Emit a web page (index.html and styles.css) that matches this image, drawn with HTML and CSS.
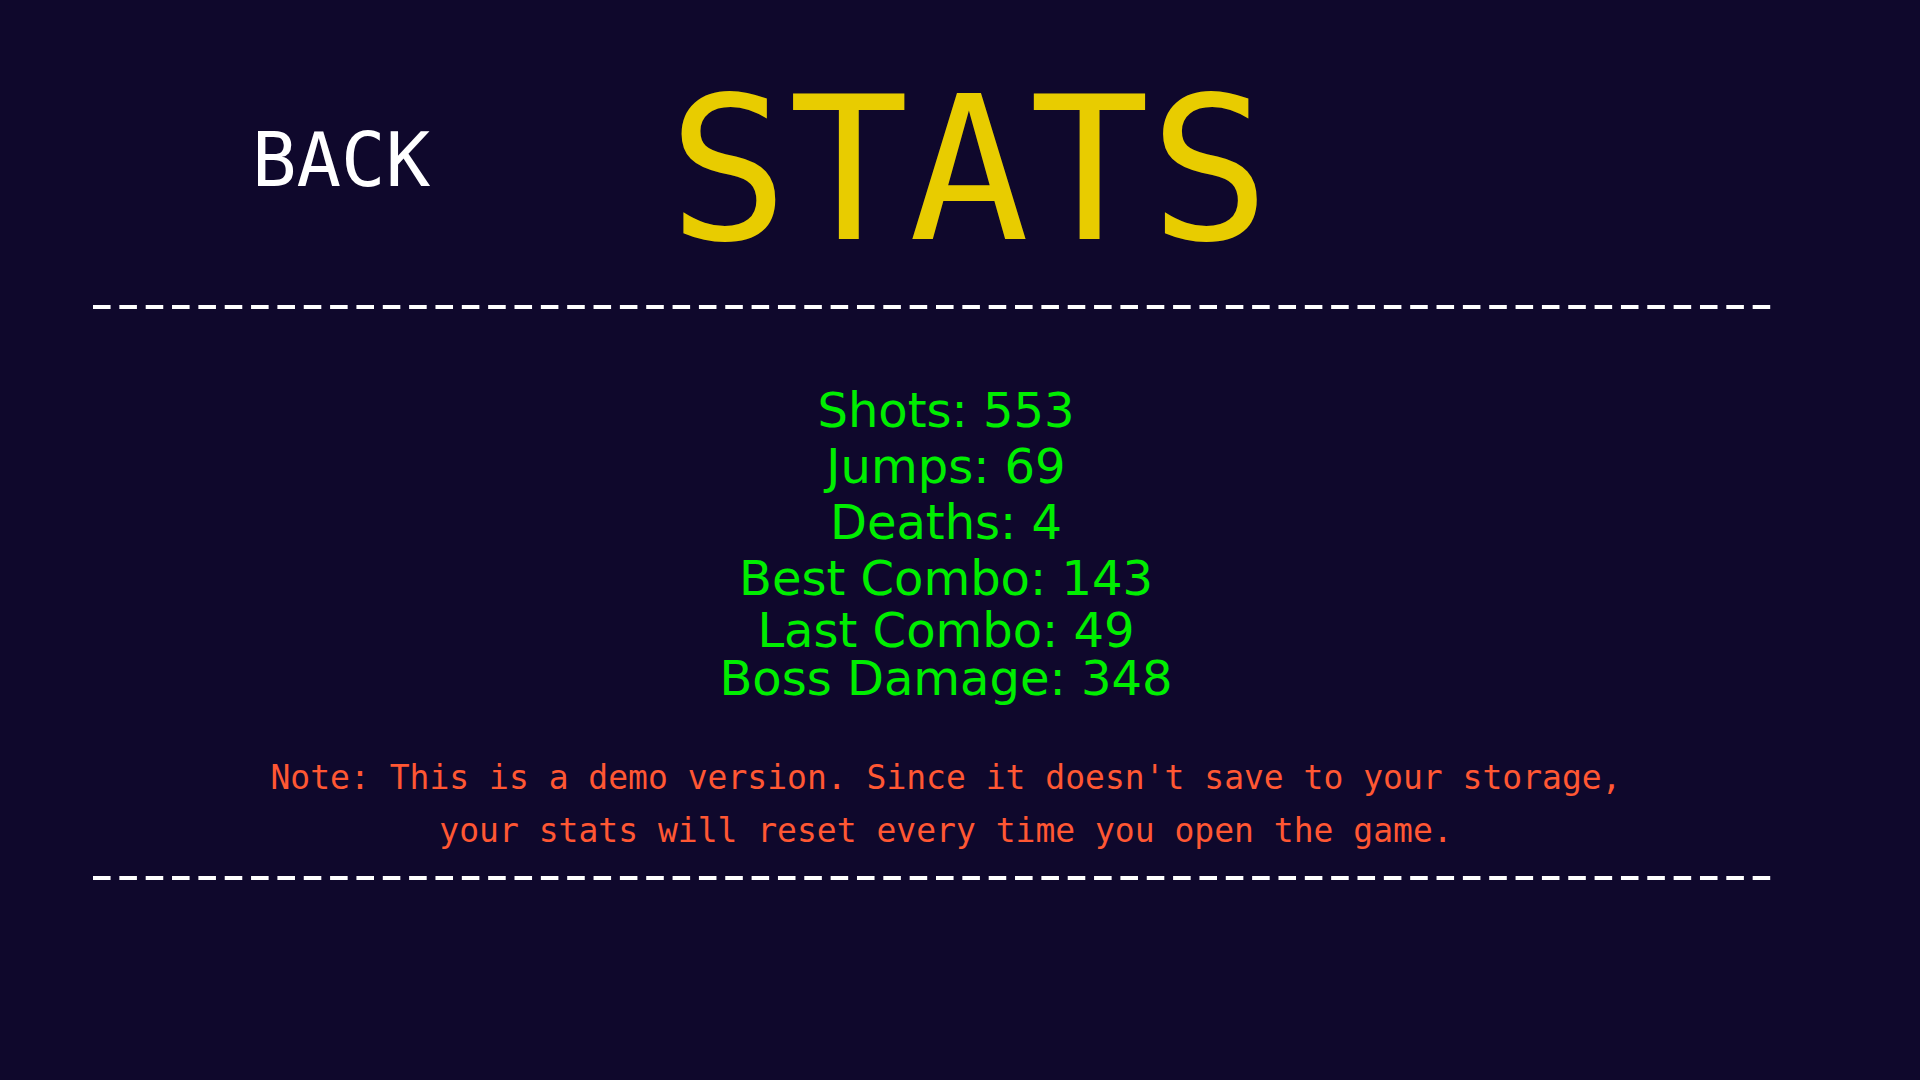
FILE: index.html
```html
<!DOCTYPE html>
<html lang="en">
<head>
  <meta charset="utf-8">
  <meta name="viewport" content="width=device-width, initial-scale=1">
  <title>Stats</title>
  <link rel="stylesheet" href="styles.css">
</head>
<body>
  <header class="header">
    <button class="back" type="button">BACK</button>
    <h1 class="title">STATS</h1>
  </header>
  <main>
    <hr class="rule">
    <section class="content">
      <ul class="stats">
        <li>Shots: 553</li>
        <li>Jumps: 69</li>
        <li>Deaths: 4</li>
        <li>Best Combo: 143</li>
      </ul>
      <ul class="stats stats-tight">
        <li>Last Combo: 49</li>
        <li>Boss Damage: 348</li>
      </ul>
      <p class="note">Note: This is a demo version. Since it doesn't save to your storage,<br>your stats will reset every time you open the game.</p>
    </section>
    <hr class="rule">
  </main>
</body>
</html>
```
FILE: styles.css
```css
* {
  box-sizing: border-box;
}

body {
  margin: 0;
  min-height: 100vh;
  background: #0f082c;
  font-family: "DejaVu Sans", sans-serif;
}

.header {
  display: grid;
  grid-template-columns: 1fr auto 1fr;
  align-items: center;
  padding: 70px 0 35px 18px;
}

.back {
  justify-self: start;
  margin: 0 0 20px 234px;
  padding: 0;
  border: 0;
  background: none;
  color: #fff;
  font: 74px/76px "DejaVu Sans Mono", monospace;
  cursor: pointer;
}

.title {
  margin: 0;
  color: #e8cc00;
  font: 200px/200px "DejaVu Sans Mono", monospace;
}

/* 64 dashes spread evenly over the line */
.rule {
  height: 4px;
  margin: 0 141px 0 93px;
  border: 0;
  background: linear-gradient(to right, #fff 67%, transparent 67%) 0 0 / calc(100% / 64) 100%;
}

.content {
  padding: 73px 28px 19px 0;
  text-align: center;
}

.stats {
  margin: 0;
  padding: 0;
  list-style: none;
  color: #00ee00;
  font-size: 48px;
  line-height: 56px;
}

.stats-tight {
  line-height: 48px;
}

.note {
  margin: 49px 0 0;
  color: #ff5733;
  font: 33px/53px "DejaVu Sans Mono", monospace;
}
```
